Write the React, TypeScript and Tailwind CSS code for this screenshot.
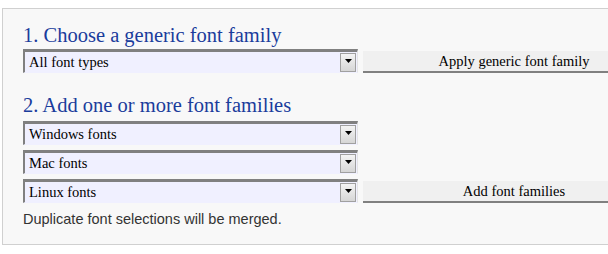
const serif = { fontFamily: '"Liberation Serif", "DejaVu Serif", serif' };

function FakeSelect({ label }: { label: string }) {
  return (
    <div
      className="flex shrink-0 items-center w-[335px] h-[24px] bg-[#f0f0ff] border-t-[3px] border-l-2 border-r border-b border-t-[#808080] border-l-[#808080] border-r-[#e4e4e4] border-b-[#f0f0ff]"
      style={serif}
    >
      <span className="flex-1 pl-[4px] text-[14.5px] text-black leading-none">{label}</span>
      <span className="mr-px flex h-[19px] w-[16px] items-start justify-center border border-[#a0a0a0] bg-gradient-to-b from-[#f4f4f4] to-[#d6d6d6] pt-[5px]">
        <svg width="7" height="4" viewBox="0 0 7 4">
          <polygon points="0,0 7,0 3.5,4" fill="#000" />
        </svg>
      </span>
    </div>
  );
}

function PlainButton({ label }: { label: string }) {
  return (
    <button
      type="button"
      className="mt-[2px] h-[22px] w-[302px] shrink-0 bg-[#f0f0f0] border-b-2 border-[#808080] text-[14.5px] text-black leading-none"
      style={serif}
    >
      {label}
    </button>
  );
}

export default function App() {
  return (
    <div className="w-[608px] h-[254px] overflow-hidden bg-white">
      <div className="ml-[2px] mt-[8px] w-[680px] border border-[#d0d0d0] bg-[#f8f8f8] pl-[20px] pt-[14px] pb-[17px]">
        <h2 className="text-[20.5px] leading-[24px] text-[#1a3c9c] mb-[2px]" style={serif}>
          1. Choose a generic font family
        </h2>
        <div className="flex items-start gap-[5px]">
          <FakeSelect label="All font types" />
          <PlainButton label="Apply generic font family" />
        </div>

        <h2 className="mt-[20px] mb-[4px] text-[20.5px] leading-[24px] text-[#1a3c9c]" style={serif}>
          2. Add one or more font families
        </h2>
        <div className="flex flex-col gap-[5px]">
          <FakeSelect label="Windows fonts" />
          <FakeSelect label="Mac fonts" />
          <div className="flex items-start gap-[5px]">
            <FakeSelect label="Linux fonts" />
            <PlainButton label="Add font families" />
          </div>
        </div>

        <p
          className="mt-[8px] text-[14.5px] leading-[16px] text-[#333]"
          style={{ fontFamily: '"Liberation Sans", Arial, sans-serif' }}
        >
          Duplicate font selections will be merged.
        </p>
      </div>
    </div>
  );
}
